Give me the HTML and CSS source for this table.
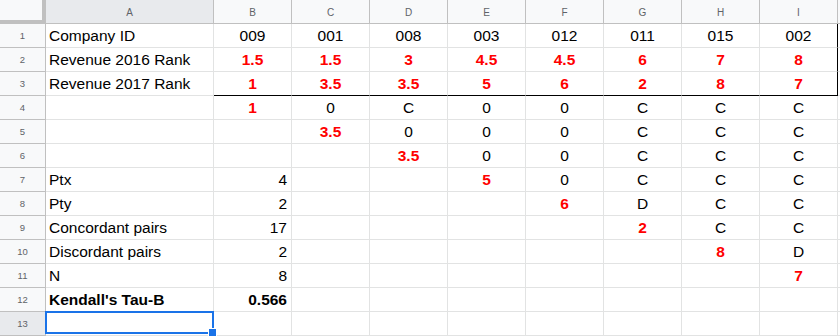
FILE: index.html
```html
<!DOCTYPE html>
<html>
<head>
<meta charset="utf-8">
<link rel="stylesheet" href="styles.css">
</head>
<body>
<div class="sheet">
  <div class="grid">
    <div class="corner"></div><div class="ch sel-h">A</div><div class="ch">B</div><div class="ch">C</div><div class="ch">D</div><div class="ch">E</div><div class="ch">F</div><div class="ch">G</div><div class="ch">H</div><div class="ch">I</div><div class="ch fill"></div>

    <div class="rh">1</div><div class="c l">Company ID</div><div class="c m">009</div><div class="c m">001</div><div class="c m">008</div><div class="c m">003</div><div class="c m">012</div><div class="c m">011</div><div class="c m">015</div><div class="c m kr">002</div><div class="c fill"></div>

    <div class="rh">2</div><div class="c l">Revenue 2016 Rank</div><div class="c m red">1.5</div><div class="c m red">1.5</div><div class="c m red">3</div><div class="c m red">4.5</div><div class="c m red">4.5</div><div class="c m red">6</div><div class="c m red">7</div><div class="c m red kr">8</div><div class="c fill"></div>

    <div class="rh">3</div><div class="c l">Revenue 2017 Rank</div><div class="c m red kb">1</div><div class="c m red kb">3.5</div><div class="c m red kb">3.5</div><div class="c m red kb">5</div><div class="c m red kb">6</div><div class="c m red kb">2</div><div class="c m red kb">8</div><div class="c m red kb kr">7</div><div class="c fill"></div>

    <div class="rh">4</div><div class="c l"></div><div class="c m red">1</div><div class="c m">0</div><div class="c m">C</div><div class="c m">0</div><div class="c m">0</div><div class="c m">C</div><div class="c m">C</div><div class="c m">C</div><div class="c fill"></div>

    <div class="rh">5</div><div class="c l"></div><div class="c m"></div><div class="c m red">3.5</div><div class="c m">0</div><div class="c m">0</div><div class="c m">0</div><div class="c m">C</div><div class="c m">C</div><div class="c m">C</div><div class="c fill"></div>

    <div class="rh">6</div><div class="c l"></div><div class="c m"></div><div class="c m"></div><div class="c m red">3.5</div><div class="c m">0</div><div class="c m">0</div><div class="c m">C</div><div class="c m">C</div><div class="c m">C</div><div class="c fill"></div>

    <div class="rh">7</div><div class="c l">Ptx</div><div class="c r">4</div><div class="c m"></div><div class="c m"></div><div class="c m red">5</div><div class="c m">0</div><div class="c m">C</div><div class="c m">C</div><div class="c m">C</div><div class="c fill"></div>

    <div class="rh">8</div><div class="c l">Pty</div><div class="c r">2</div><div class="c m"></div><div class="c m"></div><div class="c m"></div><div class="c m red">6</div><div class="c m">D</div><div class="c m">C</div><div class="c m">C</div><div class="c fill"></div>

    <div class="rh">9</div><div class="c l">Concordant pairs</div><div class="c r">17</div><div class="c m"></div><div class="c m"></div><div class="c m"></div><div class="c m"></div><div class="c m red">2</div><div class="c m">C</div><div class="c m">C</div><div class="c fill"></div>

    <div class="rh">10</div><div class="c l">Discordant pairs</div><div class="c r">2</div><div class="c m"></div><div class="c m"></div><div class="c m"></div><div class="c m"></div><div class="c m"></div><div class="c m red">8</div><div class="c m">D</div><div class="c fill"></div>

    <div class="rh">11</div><div class="c l">N</div><div class="c r">8</div><div class="c m"></div><div class="c m"></div><div class="c m"></div><div class="c m"></div><div class="c m"></div><div class="c m"></div><div class="c m red">7</div><div class="c fill"></div>

    <div class="rh">12</div><div class="c l bold">Kendall's Tau-B</div><div class="c r bold">0.566</div><div class="c m"></div><div class="c m"></div><div class="c m"></div><div class="c m"></div><div class="c m"></div><div class="c m"></div><div class="c m"></div><div class="c fill"></div>

    <div class="rh sel-h">13</div><div class="c l"></div><div class="c m"></div><div class="c m"></div><div class="c m"></div><div class="c m"></div><div class="c m"></div><div class="c m"></div><div class="c m"></div><div class="c m"></div><div class="c fill"></div>
  </div>
  <div class="selection"><div class="handle"></div></div>
</div>
</body>
</html>
```

FILE: styles.css
```css
html, body {
  margin: 0;
  padding: 0;
  background: #ffffff;
}

.sheet {
  position: relative;
  width: 840px;
  height: 336px;
  overflow: hidden;
}

.grid {
  display: grid;
  grid-template-columns: 46px 168px repeat(8, 78px) 1fr;
  grid-auto-rows: 24px;
  font-family: "Liberation Sans", Arial, sans-serif;
}

.grid > div {
  box-sizing: border-box;
  white-space: nowrap;
  overflow: visible;
}

.corner {
  background: #f8f9fa;
  border-right: 4px solid #c0c0c0;
  border-bottom: 4px solid #c0c0c0;
}

.ch {
  background: #f8f9fa;
  border-right: 1px solid #c0c0c0;
  border-bottom: 1px solid #c0c0c0;
  color: #5f6368;
  font-size: 10px;
  line-height: 23px;
  text-align: center;
  padding-top: 1px;
}

.ch.fill {
  border-right: none;
}

.rh {
  background: #f8f9fa;
  border-right: 1px solid #c0c0c0;
  border-bottom: 1px solid #c0c0c0;
  color: #5f6368;
  font-size: 9.5px;
  line-height: 23px;
  text-align: center;
}

.sel-h {
  background: #e8eaed;
}

.c {
  border-right: 1px solid #e2e3e3;
  border-bottom: 1px solid #e2e3e3;
  font-size: 15.5px;
  line-height: 22px;
  padding-top: 1px;
  color: #000000;
}

.c.fill {
  border-right: none;
}

.l {
  text-align: left;
  padding-left: 3px;
}

.m {
  text-align: center;
}

.r {
  text-align: right;
  padding-right: 4px;
}

.red {
  color: #ff0000;
  font-weight: bold;
}

.bold {
  font-weight: bold;
}

.kb {
  border-bottom-color: #000000 !important;
}

.kr {
  border-right-color: #000000 !important;
}

.selection {
  position: absolute;
  left: 45px;
  top: 311px;
  width: 169px;
  height: 23px;
  box-sizing: border-box;
  border: 2px solid #1a73e8;
}

.handle {
  position: absolute;
  right: -5px;
  bottom: -5px;
  width: 7px;
  height: 7px;
  background: #1a73e8;
  border: 1px solid #ffffff;
  box-sizing: content-box;
}
```
